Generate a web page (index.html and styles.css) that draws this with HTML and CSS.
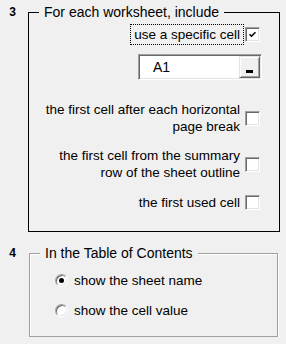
FILE: index.html
```html
<!DOCTYPE html>
<html lang="en">

<head>
    <meta charset="UTF-8">
    <title>Table of Contents options</title>
    <link rel="stylesheet" href="styles.css">
</head>

<body>
    <div class="section section-top">
        <div class="step">3</div>
        <fieldset class="group group-dark">
            <legend>For each worksheet, include</legend>
            <div class="options">
                <div class="option">
                    <span class="label focused">use a specific cell</span>
                    <span class="check">
                        <svg width="7" height="7" viewBox="0 0 7 7"><path d="M0.5 3.2 L2.5 5.2 L6.5 1.2" fill="none" stroke="#000" stroke-width="1.6"/></svg>
                    </span>
                </div>
                <div class="cell-ref">
                    <span>A1</span>
                    <span class="pick-btn"><span class="pick-bar"></span></span>
                </div>
                <div class="option opt-break">
                    <span class="label">the first cell after each horizontal<br>page break</span>
                    <span class="check"></span>
                </div>
                <div class="option opt-outline">
                    <span class="label">the first cell from the summary<br>row of the sheet outline</span>
                    <span class="check"></span>
                </div>
                <div class="option opt-used">
                    <span class="label">the first used cell</span>
                    <span class="check"></span>
                </div>
            </div>
        </fieldset>
    </div>

    <div class="section section-bottom">
        <div class="step">4</div>
        <fieldset class="group group-etched">
            <legend>In the Table of Contents</legend>
            <div class="radios">
                <div class="radio-row">
                    <span class="radio selected"></span>
                    <span>show the sheet name</span>
                </div>
                <div class="radio-row second">
                    <span class="radio"></span>
                    <span>show the cell value</span>
                </div>
            </div>
        </fieldset>
    </div>
</body>

</html>
```

FILE: styles.css
```css
body {
    margin: 0;
    background: #f0f0f0;
    font-family: "Liberation Sans", Arial, sans-serif;
    font-size: 14px;
    color: #000;
}

.section {
    display: flex;
}

.section-top {
    margin-top: 4px;
}

.section-bottom {
    margin-top: 13px;
}

.step {
    width: 16px;
    padding-right: 12px;
    text-align: right;
    font-size: 12px;
    font-weight: bold;
    line-height: 17px;
}

.group {
    margin: 0;
    padding: 0;
    min-width: 0;
    box-sizing: border-box;
}

.group legend {
    margin-left: 10px;
    padding: 0 5px;
    line-height: 17px;
    background: #f0f0f0;
}

.group-dark {
    width: 252px;
    border: 1px solid #000;
}

.group-etched {
    width: 249px;
    margin-left: 1px;
    border: 1px solid #a0a0a0;
    box-shadow: inset 1px 1px 0 #fff, 1px 1px 0 #fff;
}

/* worksheet options */
.options {
    display: flex;
    flex-direction: column;
    align-items: flex-end;
    padding: 3px 19px 18px 0;
    font-size: 13.5px;
}

.option {
    display: flex;
    align-items: center;
    gap: 1px;
}

.label {
    padding: 1px 3px;
    border: 1px solid transparent;
    line-height: 17px;
    text-align: right;
}

.label.focused {
    border: 1px dotted #000;
}

.check {
    width: 15px;
    height: 15px;
    box-sizing: border-box;
    background: #fff;
    border: 1px solid;
    border-color: #a0a0a0 #fff #fff #a0a0a0;
    box-shadow: inset 1px 1px 0 #696969, inset -1px -1px 0 #e3e3e3;
    display: flex;
    align-items: center;
    justify-content: center;
}

.cell-ref {
    margin-top: 9px;
    margin-right: -2px;
    width: 124px;
    height: 26px;
    box-sizing: border-box;
    padding: 0 1px 0 14px;
    background: #fff;
    border: 1px solid;
    border-color: #a0a0a0 #fff #fff #a0a0a0;
    box-shadow: inset 1px 1px 0 #696969, inset -1px -1px 0 #e3e3e3;
    display: flex;
    align-items: center;
    justify-content: space-between;
    font-size: 14px;
}

.pick-btn {
    width: 21px;
    height: 22px;
    box-sizing: border-box;
    background: #f0f0f0;
    border: 1px solid;
    border-color: #e3e3e3 #696969 #696969 #e3e3e3;
    box-shadow: inset 1px 1px 0 #fff, inset -1px -1px 0 #a0a0a0;
    display: flex;
    align-items: flex-end;
    justify-content: center;
    padding-bottom: 4px;
}

.pick-bar {
    width: 7px;
    height: 3px;
    background: #000;
}

.opt-break {
    margin-top: 19px;
}

.opt-outline {
    margin-top: 8px;
}

.opt-used {
    margin-top: 9px;
}

/* table of contents choice */
.radios {
    padding: 10px 0 17px 25px;
    font-size: 13.5px;
}

.radio-row {
    display: flex;
    align-items: center;
    gap: 6px;
    line-height: 17px;
}

.radio-row.second {
    margin-top: 13px;
}

.radio {
    width: 13px;
    height: 13px;
    box-sizing: border-box;
    border-radius: 50%;
    background: #fff;
    border: 1px solid;
    border-color: #a0a0a0 #fff #fff #a0a0a0;
    box-shadow: inset 1px 1px 0 #696969, inset -1px -1px 0 #e3e3e3;
    display: flex;
    align-items: center;
    justify-content: center;
}

.radio.selected::after {
    content: "";
    width: 5px;
    height: 5px;
    border-radius: 50%;
    background: #000;
}
```
